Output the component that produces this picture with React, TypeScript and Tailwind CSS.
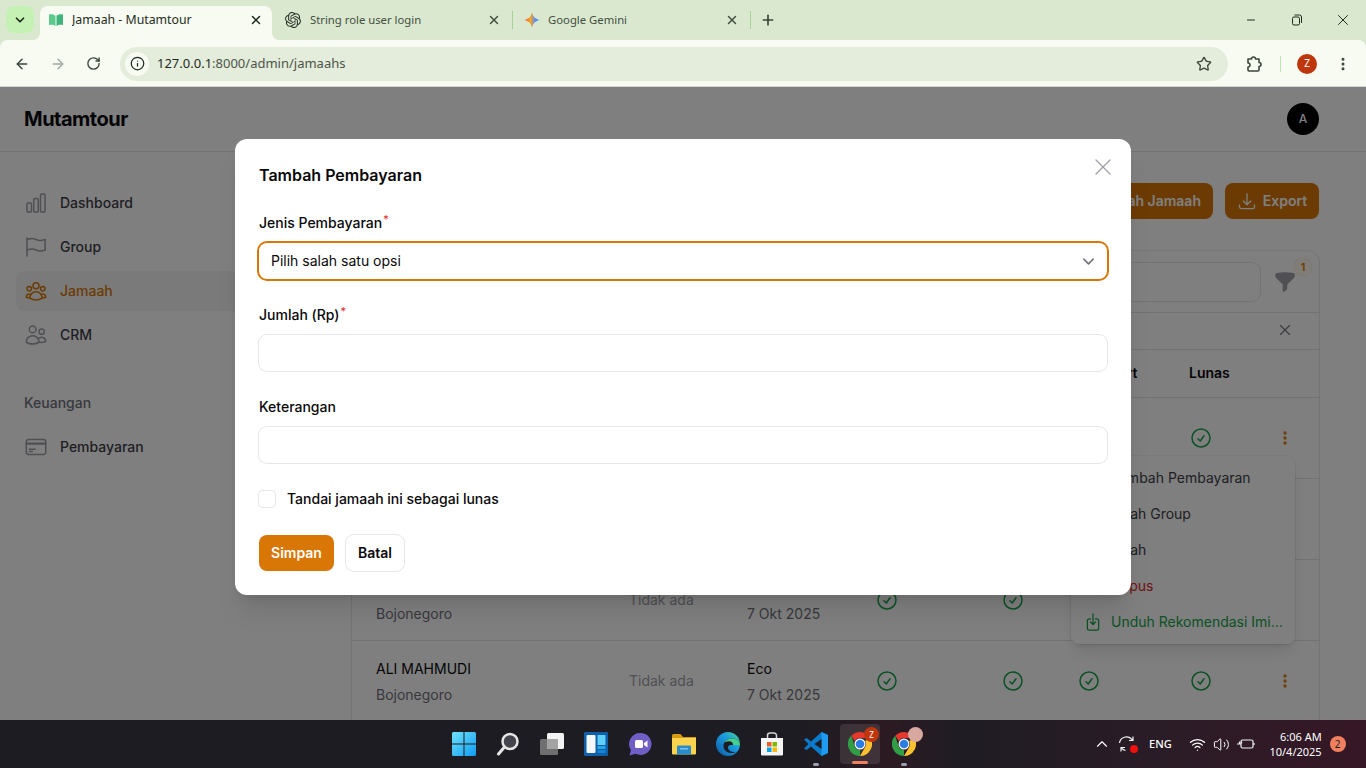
import { ArrowLeft, ArrowRight, ChevronDown, ChevronUp, Info, Minus, MoreVertical, Plus, RotateCw, Star, Volume2, Wifi, X } from 'lucide-react';
import {
  HiFunnel,
  HiOutlineArrowDownOnSquare,
  HiOutlineArrowDownTray,
  HiOutlineChartBar,
  HiOutlineCheckCircle,
  HiOutlineChevronDown,
  HiOutlineCreditCard,
  HiOutlineEllipsisVertical,
  HiOutlineFlag,
  HiOutlineUserGroup,
  HiOutlineUsers,
  HiOutlineXMark,
} from 'react-icons/hi2';
import { SiOpenai } from 'react-icons/si';

const BookIcon = () => (
  <svg width="16" height="16" viewBox="0 0 16 16">
    <path d="M1 2.500c2.500-.8 5 0 6.500 1.200V14C6 12.800 3.500 12.200 1 13z" fill="#5cc98f" />
    <path d="M15 2.500c-2.500-.8-5 0-6.500 1.200V14c1.500-1.200 4-1.800 6.500-1z" fill="#3fb57c" />
  </svg>
);

const GeminiIcon = () => (
  <svg width="16" height="16" viewBox="0 0 16 16">
    <defs>
      <linearGradient id="gem" x1="0" y1="0.5" x2="1" y2="0.5">
        <stop offset="0" stopColor="#f0503c" />
        <stop offset="0.4" stopColor="#f5a623" />
        <stop offset="0.7" stopColor="#5f8df5" />
        <stop offset="1" stopColor="#2f8bf5" />
      </linearGradient>
    </defs>
    <path d="M8 0c.6 4.300 3.700 7.400 8 8-4.300.6-7.400 3.700-8 8-.6-4.300-3.700-7.400-8-8 4.300-.6 7.400-3.700 8-8z" fill="url(#gem)" />
  </svg>
);

const RestoreIcon = () => (
  <svg width="12" height="12" viewBox="0 0 12 12" fill="none" stroke="#1f2a1c" strokeWidth="1">
    <rect x="1.500" y="3" width="7" height="8" rx="1.500" />
    <path d="M3.500 1h5a2 2 0 0 1 2 2v6" />
  </svg>
);

const ExtensionIcon = () => (
  <svg width="18" height="18" viewBox="0 0 18 18" fill="none" stroke="#3d4739" strokeWidth="1.600" strokeLinejoin="round">
    <path d="M3 4h3.500a2 2 0 0 1 4 0H14v3.500a2 2 0 0 1 0 4V15a1 1 0 0 1-1 1H4a1 1 0 0 1-1-1v-3a2 2 0 0 0 0-4z" />
  </svg>
);

const WindowsLogo = () => (
  <svg width="24" height="24" viewBox="0 0 24 24">
    <defs>
      <linearGradient id="win" x1="0" y1="0" x2="1" y2="1">
        <stop offset="0" stopColor="#6fe3fb" />
        <stop offset="1" stopColor="#0f9bf2" />
      </linearGradient>
    </defs>
    <path d="M0 1.500A1.500 1.500 0 0 1 1.500 0h10v11.500H0zM12.500 0h10A1.500 1.500 0 0 1 24 1.500v10H12.500zM0 12.500h11.500V24h-10A1.500 1.500 0 0 1 0 22.500zM12.500 12.500H24v10a1.500 1.500 0 0 1-1.500 1.500h-10z" fill="url(#win)" />
  </svg>
);

const SearchLogo = () => (
  <svg width="24" height="24" viewBox="0 0 24 24" fill="none">
    <circle cx="14" cy="9.500" r="7.500" fill="#44454c" stroke="#e6e6e6" strokeWidth="2.500" />
    <path d="M8.500 15 2.500 22" stroke="#e6e6e6" strokeWidth="3" strokeLinecap="round" />
  </svg>
);

const TaskViewLogo = () => (
  <svg width="24" height="24" viewBox="0 0 24 24">
    <rect x="7" y="1" width="17" height="16" rx="1.500" fill="#f2f2f2" />
    <rect x="0" y="7" width="18" height="16" rx="1.500" fill="#6f6f6f" />
    <rect x="7" y="7" width="11" height="10" fill="#a3a3a3" />
  </svg>
);

const WidgetsLogo = () => (
  <svg width="24" height="24" viewBox="0 0 24 24">
    <rect width="24" height="24" rx="1" fill="#0f5fa8" />
    <rect x="2.500" y="3" width="9" height="18" rx="1" fill="#f4f7fa" />
    <rect x="13.500" y="3" width="8" height="10" fill="#5fd0f7" />
    <rect x="13.500" y="14" width="8" height="3" fill="#25a5ea" />
    <rect x="13.500" y="18" width="8" height="3" fill="#1583d6" />
  </svg>
);

const MeetLogo = () => (
  <svg width="24" height="24" viewBox="0 0 24 24">
    <path d="M12.500 1a11 11 0 1 1-5 20.800L1.500 23.500l1.400-5.500A11 11 0 0 1 12.500 1z" fill="#6f5fc7" />
    <rect x="7" y="8" width="8" height="8" rx="1.500" fill="#fff" />
    <path d="m16 11 3.500-2.500v7L16 13z" fill="#fff" />
  </svg>
);

const FolderLogo = () => (
  <svg width="24" height="24" viewBox="0 0 24 24">
    <path d="M0 3.500A1.500 1.500 0 0 1 1.500 2h7L11 5h13v3H0z" fill="#d79a12" />
    <path d="M0 6h24v15.500a1 1 0 0 1-1 1H1a1 1 0 0 1-1-1z" fill="#fbd34d" />
    <path d="M5 14.500a1 1 0 0 1 1-1h12a1 1 0 0 1 1 1v8H5z" fill="#2c8bc9" />
    <rect x="8" y="16" width="8" height="1.500" fill="#7cc3ea" />
  </svg>
);

const EdgeLogo = () => (
  <svg width="24" height="24" viewBox="0 0 24 24">
    <defs>
      <linearGradient id="edge" x1="0" y1="1" x2="1" y2="0">
        <stop offset="0" stopColor="#0c59a4" />
        <stop offset="0.6" stopColor="#1b9de2" />
        <stop offset="1" stopColor="#4cd38a" />
      </linearGradient>
    </defs>
    <circle cx="12" cy="12" r="12" fill="url(#edge)" />
    <path d="M24 13c0-5-4.500-6.500-8-6.500-5 0-8.500 3.500-8.500 7.500 0 4 3.500 7 8 7 1.500 0 3-.3 4-1-3 .6-7.500-1-7.500-4.500 0-1.500 1-2.500 3-2.500h9z" fill="#1c1c22" />
    <path d="M24 13c0-5-4.500-6.500-8-6.500-3 0-6 1.500-7.500 4 2-1 4-1.500 6-1 2 .5 2.500 2 2.500 3.500z" fill="#47cf8e" />
  </svg>
);

const StoreLogo = () => (
  <svg width="24" height="24" viewBox="0 0 24 24">
    <path d="M7.500 6V3.500A2.500 2.500 0 0 1 10 1h4a2.500 2.500 0 0 1 2.500 2.500V6" fill="none" stroke="#d5d5d5" strokeWidth="1.500" />
    <path d="M1 6h22v16.500a1 1 0 0 1-1 1H2a1 1 0 0 1-1-1z" fill="#f5f5f5" />
    <rect x="7" y="10" width="4.500" height="4.500" fill="#ef5a29" />
    <rect x="12.500" y="10" width="4.500" height="4.500" fill="#7fba00" />
    <rect x="7" y="15.500" width="4.500" height="4.500" fill="#00a4ef" />
    <rect x="12.500" y="15.500" width="4.500" height="4.500" fill="#ffb900" />
  </svg>
);

const VsCodeLogo = () => (
  <svg width="24" height="24" viewBox="0 0 24 24">
    <path d="M17.500 0 24 3v18l-6.500 3L7 14.500 2.500 18 0 16.500 4.500 12 0 7.500 2.500 6 7 9.500z" fill="#0a7acb" />
    <path d="M17.500 0 24 3v18l-6.500 3z" fill="#1f9cf0" />
    <path d="M17.500 7 10.500 12l7 5z" fill="#1c1c22" />
  </svg>
);

const ChromeLogo = () => (
  <svg width="24" height="24" viewBox="0 0 24 24">
    <path d="M12 0a12 12 0 0 1 10.400 6H12a6 6 0 0 0-5.200 3L3.200 3.800A12 12 0 0 1 12 0z" fill="#e3392d" />
    <path d="M22.400 6A12 12 0 0 1 12 24l5.200-9a6 6 0 0 0 0-6z" fill="#fbc02d" />
    <path d="M12 24A12 12 0 0 1 3.200 3.800L6.800 15a6 6 0 0 0 5.200 3z" fill="#2f9e44" />
    <circle cx="12" cy="12" r="5.500" fill="#fff" />
    <circle cx="12" cy="12" r="4.300" fill="#2a7de1" />
  </svg>
);

const SyncIcon = () => (
  <svg width="20" height="20" viewBox="0 0 20 20" fill="none" stroke="#f2f2f2" strokeWidth="1.200">
    <path d="M2.500 9a7 7 0 0 1 12-4l1.500 1.500M16 2.500v4h-4M4 13.500l1.500 1.500a7 7 0 0 0 3 1.500M4 17.500v-4h4" />
  </svg>
);

const BatteryIcon = () => (
  <svg width="18" height="14" viewBox="0 0 18 14" fill="none" stroke="#f2f2f2" strokeWidth="1.200">
    <rect x="4" y="3" width="12" height="8" rx="1.500" />
    <path d="M17 6v2" />
    <path d="M0 7h4M2.500 4.500v2M4.500 4.500v2" />
  </svg>
);

const navItems = [
  { label: 'Dashboard', icon: HiOutlineChartBar },
  { label: 'Group', icon: HiOutlineFlag },
  { label: 'Jamaah', icon: HiOutlineUserGroup, active: true },
  { label: 'CRM', icon: HiOutlineUsers },
];

// first rows sit behind the modal, only the last ones show any text
const rows = [
  { id: 1 },
  { id: 2 },
  { id: 3, city: 'Bojonegoro', passport: 'Tidak ada', date: '7 Okt 2025' },
  { id: 4, name: 'ALI MAHMUDI', city: 'Bojonegoro', passport: 'Tidak ada', tier: 'Eco', date: '7 Okt 2025' },
  { id: 5 },
];

const menuItems = [
  { label: 'Tambah Pembayaran', color: 'text-zinc-700' },
  { label: 'Ubah Group', color: 'text-zinc-700' },
  { label: 'Ubah', color: 'text-zinc-700' },
  { label: 'Hapus', color: 'text-[#dc2626]' },
];

const taskbarIcons = [
  { key: 'start', el: <WindowsLogo /> },
  { key: 'search', el: <SearchLogo /> },
  { key: 'view', el: <TaskViewLogo /> },
  { key: 'widgets', el: <WidgetsLogo /> },
  { key: 'meet', el: <MeetLogo /> },
  { key: 'files', el: <FolderLogo /> },
  { key: 'edge', el: <EdgeLogo /> },
  { key: 'store', el: <StoreLogo /> },
];

const BrowserChrome = () => (
  <div className="h-[87px] shrink-0 bg-[#d9e8cf] font-['Noto_Sans',sans-serif]">
    <div className="flex h-10 items-end">
      <div className="mb-[7px] ml-[6px] flex h-[27px] w-[28px] items-center justify-center rounded-lg bg-[#c5f2b4]">
        <ChevronDown size={14} strokeWidth={3} className="text-[#1f2a1c]" />
      </div>
      <div className="relative ml-[6px] flex h-[34px] w-[232px] items-center rounded-t-lg bg-[#f7fbf2] pb-[6px] pl-[8px] pr-[9px] text-[12.300px] text-[#1f2a1c]">
        <span className="absolute -left-2 bottom-0 h-2 w-2 bg-[radial-gradient(circle_at_0_0,transparent_8px,#f7fbf2_8px)]" />
        <span className="absolute -right-2 bottom-0 h-2 w-2 bg-[radial-gradient(circle_at_100%_0,transparent_8px,#f7fbf2_8px)]" />
        <BookIcon />
        <span className="ml-2 flex-1 truncate">Jamaah - Mutamtour</span>
        <X size={14} strokeWidth={2.500} />
      </div>
      <div className="flex h-[34px] w-[240px] items-center pb-[6px] pl-[13px] pr-[11px] text-[11.300px] text-[#444f40]">
        <SiOpenai size={16} className="text-[#2c332a]" />
        <span className="ml-[9px] flex-1 truncate">String role user login</span>
        <X size={14} strokeWidth={2.500} />
      </div>
      <div className="mb-[11px] h-[18px] w-px bg-[#a8d29a]" />
      <div className="flex h-[34px] w-[237px] items-center pb-[6px] pl-[11px] pr-[11px] text-[11.300px] text-[#444f40]">
        <GeminiIcon />
        <span className="ml-2 flex-1 truncate">Google Gemini</span>
        <X size={14} strokeWidth={2.500} />
      </div>
      <div className="mb-[11px] h-[18px] w-px bg-[#a8d29a]" />
      <div className="flex h-[34px] items-center pb-[6px] pl-[9px]">
        <Plus size={16} strokeWidth={2.500} className="text-[#3a4536]" />
      </div>
      <div className="flex h-10 flex-1 items-center justify-end text-[#1f2a1c]">
        <div className="flex w-[46px] justify-center"><Minus size={12} /></div>
        <div className="flex w-[46px] justify-center"><RestoreIcon /></div>
        <div className="flex w-[46px] justify-center"><X size={18} strokeWidth={1.300} /></div>
      </div>
    </div>
    <div className="flex h-[47px] items-center rounded-t-lg border-b border-[#d4d6d0] bg-[#f7fbf2] pl-[14px] pt-px text-[#3d4739]">
      <ArrowLeft size={16} strokeWidth={2.200} />
      <ArrowRight size={16} strokeWidth={2.200} className="ml-5 text-[#a3aa9f]" />
      <RotateCw size={15} strokeWidth={2.200} className="ml-5" />
      <div className="ml-[19px] flex h-[34px] w-[1108px] items-center rounded-full bg-[#e4ecdc] pl-[5px] pr-4">
        <div className="flex h-6 w-6 items-center justify-center rounded-full bg-[#f7fbf2]">
          <Info size={15} strokeWidth={2} className="text-[#1f2a1c]" />
        </div>
        <span className="ml-[8px] flex-1 text-[13px] text-[#1f2a1c]">
          127.0.0.1<span className="text-[#4c5548]">:8000/admin/jamaahs</span>
        </span>
        <Star size={16} strokeWidth={2} />
      </div>
      <div className="ml-[17px]"><ExtensionIcon /></div>
      <div className="ml-[17px] h-4 w-px bg-[#bfe3b2]" />
      <div className="ml-4 flex h-5 w-5 items-center justify-center rounded-full bg-[#c0360c] text-[10px] text-white">Z</div>
      <MoreVertical size={16} strokeWidth={2.500} className="ml-[18px]" />
    </div>
  </div>
);

const Sidebar = () => (
  <aside className="w-[320px] shrink-0 px-4 pt-[31px]">
    <nav className="flex flex-col gap-1">
      {navItems.map(({ label, icon: Icon, active }) => (
        <div key={label} className={`flex h-10 items-center gap-3 rounded-lg px-2 ${active ? 'bg-zinc-100' : ''}`}>
          <Icon size={24} className={active ? 'text-[#d97706]' : 'text-zinc-400'} />
          <span className={`text-sm font-medium ${active ? 'text-[#d97706]' : 'text-zinc-700'}`}>{label}</span>
        </div>
      ))}
    </nav>
    <p className="mt-[38px] px-2 text-sm font-medium text-zinc-500">Keuangan</p>
    <div className="mt-[14px] flex h-10 items-center gap-3 rounded-lg px-2">
      <HiOutlineCreditCard size={24} className="text-zinc-400" />
      <span className="text-sm font-medium text-zinc-700">Pembayaran</span>
    </div>
  </aside>
);

const Table = () => (
  <div className="relative mt-8 w-[967px] rounded-xl bg-white shadow-sm ring-1 ring-zinc-950/5">
    <div className="flex h-[61px] items-center justify-end pt-px">
      <div className="h-[38px] w-[300px] rounded-lg ring-1 ring-zinc-950/10" />
      <div className="relative ml-[13px] mr-[22px] flex w-6 justify-center">
        <HiFunnel size={24} className="text-zinc-400" />
        <span className="absolute -right-[14px] -top-[11px] flex h-4 w-4 items-center justify-center rounded-md bg-amber-50 text-[11px] font-semibold text-[#d97706] ring-1 ring-[#d97706]/10">1</span>
      </div>
    </div>
    <div className="flex h-[38px] items-center justify-end border-y border-zinc-200 pb-[2px] pr-[25px]">
      <HiOutlineXMark size={18} className="text-zinc-500" />
    </div>
    <div className="grid h-[48px] grid-cols-[727px_112px_1fr] items-center border-b border-zinc-200 pb-[2px] text-sm font-semibold text-zinc-950">
      <span className="whitespace-nowrap pl-[725px]">Passport</span>
      <span />
      <span className="-ml-[2px]">Lunas</span>
    </div>
    {rows.map((row) => (
      <div
        key={row.id}
        className="grid h-[81px] grid-cols-[277px_118px_130px_126px_76px_112px_1fr] items-center border-b border-zinc-200 text-sm"
      >
        <div className="pl-6 pt-[2px]">
          <p className="h-5 text-zinc-950">{row.name}</p>
          <p className="mt-[6px] h-5 text-zinc-500">{row.city}</p>
        </div>
        <span className="text-zinc-400">{row.passport}</span>
        <div className="pt-[2px]">
          <p className="h-5 text-zinc-950">{row.tier}</p>
          <p className="mt-[6px] h-5 text-zinc-500">{row.date}</p>
        </div>
        <HiOutlineCheckCircle size={24} className="-ml-[2px] text-[#16a34a]" />
        <HiOutlineCheckCircle size={24} className="-ml-[2px] text-[#16a34a]" />
        <HiOutlineCheckCircle size={24} className="-ml-[2px] text-[#16a34a]" />
        <div className="flex items-center justify-between pr-6">
          <HiOutlineCheckCircle size={24} className="-ml-[2px] text-[#16a34a]" />
          <HiOutlineEllipsisVertical size={20} className="text-[#d97706]" strokeWidth={2.500} />
        </div>
      </div>
    ))}
    <div className="absolute right-6 top-[205px] w-[224px] rounded-lg bg-white pb-1 pt-1 shadow-lg ring-1 ring-zinc-950/5">
      {menuItems.map((item) => (
        <div key={item.label} className={`flex h-9 items-center pl-[40px] text-sm ${item.color}`}>{item.label}</div>
      ))}
      <div className="flex h-9 items-center gap-2 px-3 text-sm text-[#16a34a]">
        <HiOutlineArrowDownOnSquare size={20} className="shrink-0" />
        <span className="truncate">Unduh Rekomendasi Imigrasi</span>
      </div>
    </div>
  </div>
);

const Field = ({ label, required, children }: { label: string; required?: boolean; children: React.ReactNode }) => (
  <div className="mt-[26px]">
    <p className="h-5 text-sm font-medium leading-5 text-zinc-950">
      {label}
      {required && <sup className="ml-px text-[11px] font-normal text-[#dc2626]">*</sup>}
    </p>
    <div className="mt-[10px]">{children}</div>
  </div>
);

const Modal = () => (
  <div className="absolute inset-0 flex items-start justify-center bg-black/50 pt-[52px]">
    <div className="relative w-[896px] rounded-xl bg-white px-6 pb-6 pt-6 shadow-xl">
      <h2 className="text-base font-semibold leading-6 text-zinc-950">Tambah Pembayaran</h2>
      <X size={28} strokeWidth={1.100} className="absolute right-[14px] top-[14px] text-zinc-400" />

      <Field label="Jenis Pembayaran" required>
        <div className="flex h-9 items-center justify-between rounded-lg pl-3 pr-[11px] text-sm text-zinc-950 ring-2 ring-[#d97706]">
          <span>Pilih salah satu opsi</span>
          <HiOutlineChevronDown size={15} strokeWidth={2.500} className="text-zinc-500" />
        </div>
      </Field>
      <Field label="Jumlah (Rp)" required>
        <div className="h-9 rounded-lg bg-white ring-1 ring-zinc-950/10" />
      </Field>
      <Field label="Keterangan">
        <div className="h-9 rounded-lg bg-white ring-1 ring-zinc-950/10" />
      </Field>

      <div className="mt-[28px] flex h-4 items-center gap-3">
        <div className="h-4 w-4 rounded bg-white ring-1 ring-zinc-950/10" />
        <span className="text-sm font-medium text-zinc-950">Tandai jamaah ini sebagai lunas</span>
      </div>

      <div className="mt-[28px] flex gap-3">
        <button className="flex h-9 w-[75px] items-center justify-center rounded-lg bg-[#d97706] text-sm font-semibold text-white">Simpan</button>
        <button className="flex h-9 w-[58px] items-center justify-center rounded-lg bg-white text-sm font-semibold text-zinc-950 ring-1 ring-zinc-950/10">Batal</button>
      </div>
    </div>
  </div>
);

const Taskbar = () => (
  <div className="relative flex h-12 shrink-0 items-center bg-[linear-gradient(90deg,#1c1c22_0%,#1c1c22_58%,#2c1a22_65%,#1f1c24_70%,#2a1c26_85%,#361726_100%)] font-['Noto_Sans',sans-serif] text-white">
    <div className="ml-[442px] flex items-center">
      {taskbarIcons.map((icon) => (
        <div key={icon.key} className="flex h-12 w-11 items-center justify-center">{icon.el}</div>
      ))}
      <div className="relative flex h-12 w-11 items-center justify-center">
        <VsCodeLogo />
        <span className="absolute bottom-[2px] h-[3px] w-[6px] rounded-full bg-gray-400" />
      </div>
      <div className="flex h-12 w-11 items-center justify-center">
        <div className="relative flex h-10 w-10 items-center justify-center rounded bg-white/10">
          <ChromeLogo />
          <span className="absolute right-[1px] top-[3px] flex h-[15px] w-[15px] items-center justify-center rounded-full bg-[#c0360c] text-[8px]">Z</span>
          <span className="absolute bottom-0 h-[3px] w-4 rounded-full bg-[#f08060]" />
        </div>
      </div>
      <div className="relative flex h-12 w-11 items-center justify-center">
        <ChromeLogo />
        <span className="absolute right-[3px] top-[7px] h-[15px] w-[15px] rounded-full bg-[#d8a8a0]" />
        <span className="absolute bottom-[2px] h-[3px] w-[6px] rounded-full bg-gray-400" />
      </div>
    </div>
    <div className="ml-[167px] flex items-center">
      <ChevronUp size={18} strokeWidth={1.500} />
      <div className="relative ml-[6px]">
        <SyncIcon />
        <span className="absolute bottom-[1px] right-[-1px] h-2 w-2 rounded-full bg-[#f01010]" />
      </div>
      <span className="ml-[12px] text-[11px] font-medium">ENG</span>
      <Wifi size={17} strokeWidth={1.700} className="ml-[17px]" />
      <Volume2 size={17} strokeWidth={1.400} className="ml-[7px]" />
      <div className="ml-[7px]"><BatteryIcon /></div>
      <div className="ml-[13px] w-[54px] text-right text-[11px] leading-[15px]">
        <p className="whitespace-nowrap">6:06 AM</p>
        <p className="whitespace-nowrap">10/4/2025</p>
      </div>
      <span className="ml-2 flex h-4 w-4 items-center justify-center rounded-full bg-[#f08060] text-[10px] text-[#1c1c22]">2</span>
    </div>
  </div>
);

export default function App() {
  return (
    <div className="flex h-screen flex-col overflow-hidden font-['Inter',sans-serif]">
      <BrowserChrome />
      <div className="relative min-h-0 flex-1 overflow-hidden bg-white">
        <header className="flex h-[65px] items-center justify-between border-b border-zinc-200 pl-6 pr-[47px]">
          <span className="text-xl font-bold tracking-tight text-zinc-950">Mutamtour</span>
          <div className="flex h-8 w-8 items-center justify-center rounded-full bg-black text-xs font-medium text-white">A</div>
        </header>
        <div className="flex">
          <Sidebar />
          <main className="pl-8 pt-[31px]">
            <div className="flex justify-end gap-3">
              <button className="flex h-9 items-center gap-[6px] rounded-lg bg-[#d97706] px-3 text-sm font-semibold text-white">Tambah Jamaah</button>
              <button className="flex h-9 w-[94px] items-center justify-center gap-[6px] rounded-lg bg-[#d97706] text-sm font-semibold text-white">
                <HiOutlineArrowDownTray size={20} />
                Export
              </button>
            </div>
            <Table />
          </main>
        </div>
        <Modal />
      </div>
      <Taskbar />
    </div>
  );
}
